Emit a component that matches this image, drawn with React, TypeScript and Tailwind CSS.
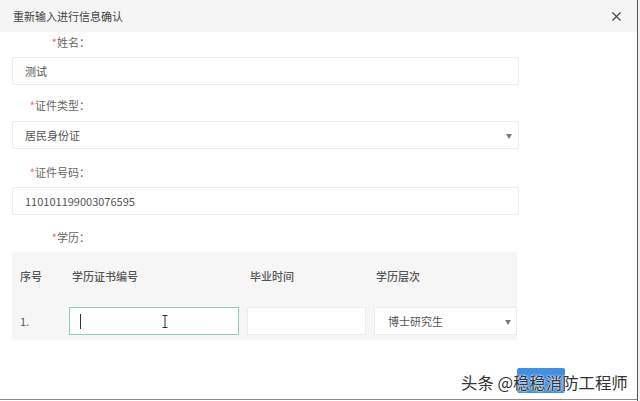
import { X } from 'lucide-react';

const font = { fontFamily: '"Noto Sans CJK SC", "Liberation Sans", sans-serif' };

function Label({ text, className }: { text: string; className?: string }) {
	return (
		<div className={`w-[90px] h-[16px] leading-[16px] text-right text-[11px] text-[#666] ${className ?? ''}`}>
			<span className="text-[#f06a6a]">*</span>
			{text}：
		</div>
	);
}

function Field({ value, select }: { value: string; select?: boolean }) {
	return (
		<div className="w-[507px] h-[28px] flex items-center justify-between border border-[#ececec] rounded-[2px] bg-white pl-[12px] pr-[6px] text-[11px] text-[#555]">
			<span>{value}</span>
			{select && <span className="text-[6px] text-[#777]">▼</span>}
		</div>
	);
}

export default function App() {
	return (
		<div
			className="relative w-[640px] h-[401px] overflow-hidden bg-white flex"
			style={font}
		>
			<div className="w-[637px] h-[400px] flex flex-col border-b border-[#8a8a8a]">
				<div className="h-[32px] bg-[#f5f5f5] flex items-center justify-between pl-[13px] pr-[13px]">
					<span className="text-[11px] text-[#444]">重新输入进行信息确认</span>
					<X
						size={15}
						strokeWidth={1.8}
						className="text-[#444]"
					/>
				</div>
				<div className="pl-[12px] flex flex-col">
					<Label
						text="姓名"
						className="mt-[2px] -ml-[12px]"
					/>
					<div className="mt-[7px]">
						<Field value="测试" />
					</div>
					<Label
						text="证件类型"
						className="mt-[12px] -ml-[12px]"
					/>
					<div className="mt-[8px]">
						<Field
							value="居民身份证"
							select
						/>
					</div>
					<Label
						text="证件号码"
						className="mt-[15px] -ml-[12px]"
					/>
					<div className="mt-[7px]">
						<Field value="110101199003076595" />
					</div>
					<Label
						text="学历"
						className="mt-[14px] -ml-[12px]"
					/>
					<div className="mt-[7px] w-[505px] h-[88px] bg-[#f6f6f6] rounded-[2px] pl-[8px] text-[11px]">
						<div className="flex pt-[17px] h-[38px] leading-[14px] text-[#555] font-medium">
							<div className="w-[49px]">序号</div>
							<div className="w-[178px] pl-[3px]">学历证书编号</div>
							<div className="w-[127px] pl-[3px]">毕业时间</div>
							<div className="pl-[2px]">学历层次</div>
						</div>
						<div className="flex items-center mt-[17px]">
							<div className="w-[49px] text-[#555]">1.</div>
							<div className="relative w-[170px] h-[28px] border border-[#8fcabd] bg-white flex items-center pl-[10px]">
								<span className="w-px h-[15px] bg-[#333]" />
								<svg
									className="absolute left-[92px] top-[7px]"
									width="6"
									height="13"
									viewBox="0 0 6 13"
								>
									<path
										d="M0.5 0.5h5M3 0.5v12M0.5 12.5h5"
										stroke="#333"
										strokeWidth="1"
										fill="none"
									/>
								</svg>
							</div>
							<div className="ml-[8px] w-[119px] h-[28px] border border-[#ececec] bg-white" />
							<div className="ml-[8px] w-[143px] h-[28px] border border-[#ececec] bg-white flex items-center justify-between pl-[13px] pr-[5px] text-[#555]">
								<span>博士研究生</span>
								<span className="text-[6px] text-[#777]">▼</span>
							</div>
						</div>
					</div>
					<div className="w-[553px] flex justify-end mt-[28px]">
						<div className="w-[48px] h-[25px] bg-[#3f8fe3] rounded-[2px]" />
					</div>
				</div>
			</div>
			<div className="w-[1px] h-full bg-[#555]" />
			<div className="w-[2px] h-full bg-[#f2f2f2]" />
			<div
				className="absolute left-[461px] top-[370px] text-[16.4px] leading-[24px] text-[#333] whitespace-nowrap"
				style={{ textShadow: '0 0 2px #fff, 0 0 2px #fff' }}
			>
				头条 @稳稳消防工程师
			</div>
		</div>
	);
}
